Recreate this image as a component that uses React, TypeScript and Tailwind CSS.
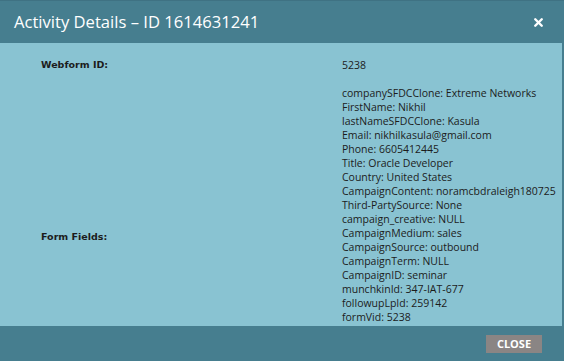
import { X } from "lucide-react";

const formFields = [
  "companySFDCClone: Extreme Networks",
  "FirstName: Nikhil",
  "lastNameSFDCClone: Kasula",
  "Email: nikhilkasula@gmail.com",
  "Phone: 6605412445",
  "Title: Oracle Developer",
  "Country: United States",
  "CampaignContent: noramcbdraleigh180725",
  "Third-PartySource: None",
  "campaign_creative: NULL",
  "CampaignMedium: sales",
  "CampaignSource: outbound",
  "CampaignTerm: NULL",
  "CampaignID: seminar",
  "munchkinId: 347-IAT-677",
  "followupLpId: 259142",
  "formVid: 5238",
];

export default function App() {
  return (
    <div className="flex h-[361px] w-[564px] flex-col overflow-hidden bg-[#467e8f]">
      <header className="flex h-[43px] shrink-0 items-center justify-between border-t border-[#3f7283] pl-[14px] pr-[19px]">
        <h1 className="font-['Open_Sans',sans-serif] text-[16.6px] leading-none text-white">
          Activity Details – ID 1614631241
        </h1>
        <X className="h-[13px] w-[13px] text-white" strokeWidth={4.5} />
      </header>

      <div className="mr-[2px] min-h-0 flex-1 overflow-hidden bg-[#89c3d2] pt-[15px] text-[#1c1c1c]">
        <div className="grid grid-cols-[301px_1fr] gap-y-[14px] pl-[41px]">
          <div className="font-['DejaVu_Sans',sans-serif] text-[9.5px] font-bold leading-[14px]">
            Webform ID:
          </div>
          <div className="font-['Open_Sans',sans-serif] text-[10.5px] leading-[14px]">5238</div>

          <div className="pt-[144px] font-['DejaVu_Sans',sans-serif] text-[9.5px] font-bold leading-[14px]">
            Form Fields:
          </div>
          <div className="whitespace-nowrap font-['Open_Sans',sans-serif] text-[10.5px] leading-[14px]">
            {formFields.map((f) => (
              <div key={f}>{f}</div>
            ))}
          </div>
        </div>
      </div>

      <footer className="flex h-[35px] shrink-0 items-center justify-end pr-[22px]">
        <button className="h-[18px] w-[56px] bg-[#8a8584] font-['Open_Sans',sans-serif] text-[11px] font-bold leading-none text-white">
          CLOSE
        </button>
      </footer>
    </div>
  );
}
